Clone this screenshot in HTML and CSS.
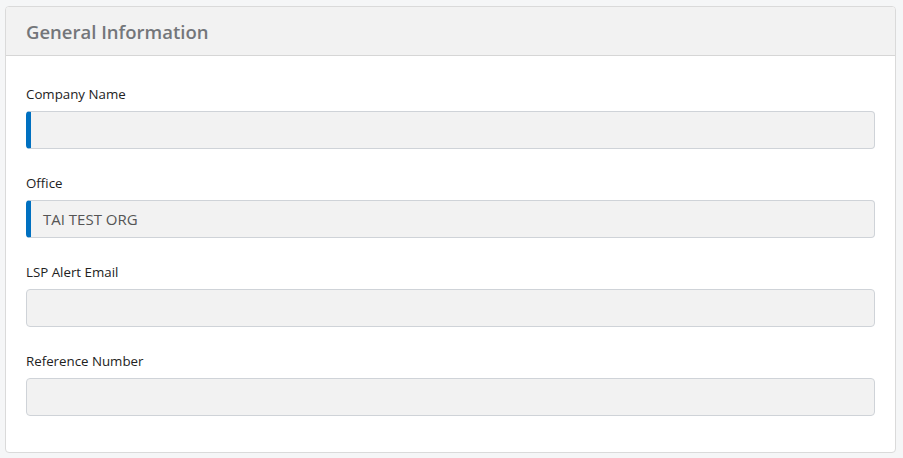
FILE: index.html
```html
<!DOCTYPE html>
<html>
<head>
<meta charset="utf-8">
<link rel="stylesheet" href="styles.css">
</head>
<body>
<section class="card">
  <header class="card-header"><h2 class="card-title">General Information</h2></header>
  <div class="card-body">
    <div class="field">
      <label class="field-label">Company Name</label>
      <div class="input input-required"></div>
    </div>
    <div class="field">
      <label class="field-label">Office</label>
      <div class="input input-required"><span class="input-value">TAI TEST ORG</span></div>
    </div>
    <div class="field">
      <label class="field-label">LSP Alert Email</label>
      <div class="input"></div>
    </div>
    <div class="field">
      <label class="field-label">Reference Number</label>
      <div class="input"></div>
    </div>
  </div>
</section>
</body>
</html>
```
FILE: styles.css
```css
html, body { margin: 0; padding: 0; }
body {
  background: #f5f6f7;
  font-family: "Open Sans", "Liberation Sans", sans-serif;
  padding: 6px 7px 0 5px;
  height: 458px;
  box-sizing: border-box;
}
.card {
  background: #fff;
  border: 1px solid #dadada;
  border-radius: 4px;
  height: 447px;
  box-sizing: border-box;
  overflow: hidden;
}
.card-header {
  background: #f2f2f2;
  border-bottom: 1px solid #d6d6d6;
  height: 49px;
  box-sizing: border-box;
  display: flex;
  align-items: center;
  padding: 1px 20px 0 20px;
}
.card-title {
  margin: 0;
  font-size: 18.5px;
  font-weight: 600;
  color: #74767a;
}
.card-body {
  padding: 29px 20px 0 20px;
  display: flex;
  flex-direction: column;
  gap: 25px;
}
.field { display: flex; flex-direction: column; gap: 8px; }
.field-label {
  font-size: 13.3px;
  color: #222;
  line-height: 18px;
}
.input {
  height: 38px;
  box-sizing: border-box;
  background: #f2f2f2;
  border: 1px solid #cfd3d8;
  border-radius: 4px;
  display: flex;
  align-items: center;
  padding-left: 16px;
}
.input-required {
  border-left: 5px solid #0070c0;
  padding-left: 12px;
}
.input-value {
  font-size: 15px;
  color: #555;
}
```
